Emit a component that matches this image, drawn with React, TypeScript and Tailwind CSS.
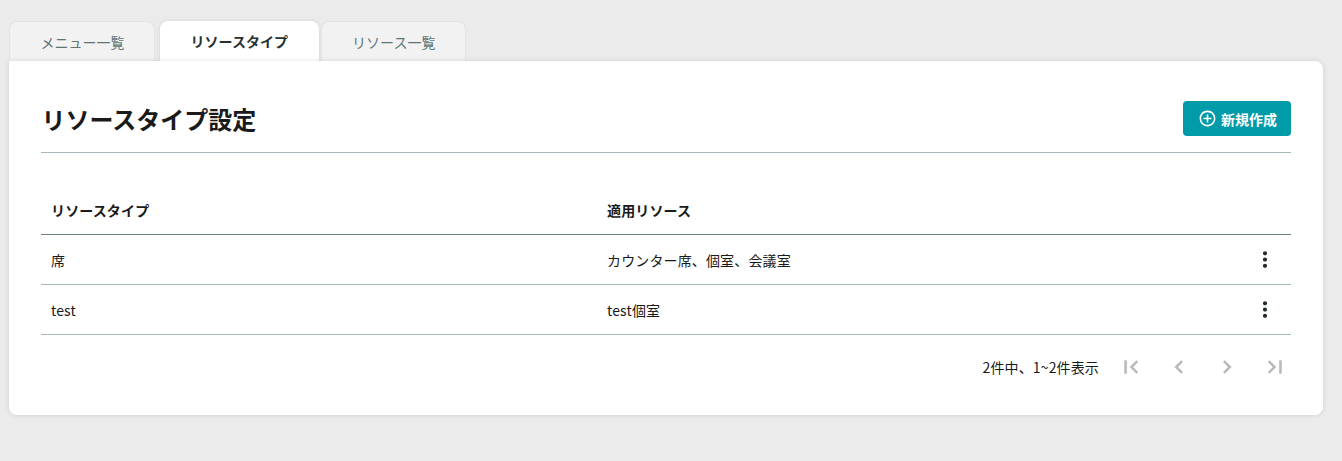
import { MdAddCircleOutline, MdChevronLeft, MdChevronRight, MdFirstPage, MdLastPage, MdMoreVert } from "react-icons/md";
import clsx from "clsx";

type ResourceType = {
  id: number;
  name: string;
  resources: string;
};

const tabs = [
  { label: "メニュー一覧", active: false, width: "w-[146px] pl-px" },
  { label: "リソースタイプ", active: true, width: "w-[159px]" },
  { label: "リソース一覧", active: false, width: "w-[145px]" },
];

const resourceTypes: ResourceType[] = [
  { id: 1, name: "席", resources: "カウンター席、個室、会議室" },
  { id: 2, name: "test", resources: "test個室" },
];

// the glyphs carry an unfilled bounding path, so only the filled ones get a stroke
const pagerIcon = "size-[26px] stroke-none [&>path:not([fill=none])]:stroke-current [&>path:not([fill=none])]:stroke-[0.4]";

const pagerButtons = [
  { label: "最初のページ", icon: <MdFirstPage className={pagerIcon} /> },
  { label: "前のページ", icon: <MdChevronLeft className={pagerIcon} /> },
  { label: "次のページ", icon: <MdChevronRight className={pagerIcon} /> },
  { label: "最後のページ", icon: <MdLastPage className={pagerIcon} /> },
];

export default function App() {
  return (
    <div className="h-[461px] bg-[#ebebeb] pt-[21px] pr-[19px] pl-[9px] font-['Noto_Sans_CJK_JP',sans-serif] text-sm text-[#1a1a1a]">
      {/* Tabs */}
      <div className="flex h-10 items-end">
        {tabs.map((tab) => (
          <button
            key={tab.label}
            className={clsx(
              "flex h-10 items-center justify-center rounded-t-lg",
              tab.width,
              tab.active
                ? "mr-[2.5px] ml-[4.75px] bg-white font-bold text-[#263232] shadow-[0_0_4px_rgba(0,0,0,0.1)]"
                : "border border-b-0 border-[#e3e3e3] bg-[#f2f2f2] pt-px text-[#5f7575]"
            )}
          >
            {tab.label}
          </button>
        ))}
      </div>

      {/* Panel */}
      <div className="relative h-[354px] rounded-lg rounded-tl-none bg-white px-8 pt-10 shadow-[0_0_5px_rgba(0,0,0,0.12)]">
        <div className="flex h-[52px] items-start justify-between border-b border-[#a3b9b9]">
          <h1 className="pl-[0.5px] text-2xl leading-9 font-bold">リソースタイプ設定</h1>
          <button className="flex h-[35px] w-[108px] items-center justify-center gap-1 rounded-[4px] bg-[#009ba9] pl-[2px] font-bold text-white">
            <MdAddCircleOutline className="-ml-px size-[19px]" />
            新規作成
          </button>
        </div>

        <table className="mt-8 w-full table-fixed text-left tracking-[0.14px]">
          <thead>
            <tr className="h-[49px] border-b border-[#6b8080]">
              <th className="w-[556px] pt-px pl-[10px]">リソースタイプ</th>
              <th className="pt-px pl-[10px]">適用リソース</th>
              <th className="w-[52px]" />
            </tr>
          </thead>
          <tbody>
            {resourceTypes.map((type) => (
              <tr key={type.id} className="h-[50px] border-b border-[#a3b9b9]">
                <td className="pt-[2px] pl-[10px]">{type.name}</td>
                <td className="pt-[2px] pl-[10px]">{type.resources}</td>
                <td>
                  <button className="flex h-[25px] w-[52px] items-center justify-center text-[#232b2b]">
                    <MdMoreVert className="h-[25px] w-[26px]" />
                  </button>
                </td>
              </tr>
            ))}
          </tbody>
        </table>

        {/* Pagination */}
        <div className="mt-2 -mr-2 flex h-12 items-center justify-end">
          <span className="mr-2 tracking-[0.14px]">2件中、1~2件表示</span>
          {pagerButtons.map((button) => (
            <button key={button.label} aria-label={button.label} className="flex size-12 items-center justify-center text-[#b8b8b8]">
              {button.icon}
            </button>
          ))}
        </div>
      </div>
    </div>
  );
}
